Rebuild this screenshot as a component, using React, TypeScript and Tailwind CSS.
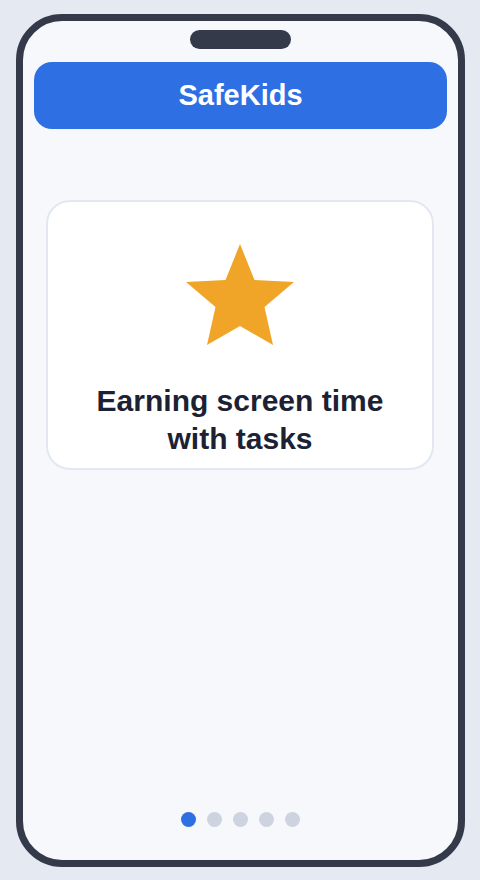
import type React from "react";

const DOTS = ["dot-0", "dot-1", "dot-2", "dot-3", "dot-4"];

const Star: React.FC = () => (
	<svg width="110" height="104" viewBox="0 0 110 104" aria-hidden="true">
		<polygon
			points="55,1 69.5,37 109,39 79.5,64 88,102 55,83 22,102 30.5,64 1,39 40.5,37"
			fill="#f0a528"
		/>
	</svg>
);

export default function App() {
	const active = 0;

	return (
		<div
			className="min-h-screen bg-[#e5e9f2] pt-[14px] pl-[16px]"
			style={{ fontFamily: "'Liberation Sans', Arial, sans-serif" }}
		>
			<div className="w-[449px] h-[853px] border-[7px] border-[#343a4a] rounded-[46px] bg-[#f6f8fc] flex flex-col">
				{/* notch */}
				<div className="mx-auto mt-[9px] w-[101px] h-[19px] rounded-full bg-[#343a4a]" />

				<header className="mt-[13px] ml-[11px] mr-[11px] h-[67px] rounded-[18px] bg-[#2f6fe4] flex items-center justify-center">
					<h1 className="text-white text-[29px] font-bold leading-none">SafeKids</h1>
				</header>

				<div className="mt-[71px] ml-[23px] mr-[24px] h-[270px] rounded-[24px] border-2 border-[#e2e7f1] bg-white flex flex-col items-center pt-[41px]">
					<Star />
					<p className="mt-[35px] text-center text-[30px] leading-[38px] font-bold text-[#1c2233]">
						Earning screen time
						<br />
						with tasks
					</p>
				</div>

				<div className="mt-auto mb-[33px] flex justify-center gap-[11px]">
					{DOTS.map((id, i) => (
						<span
							key={id}
							className={`block w-[15px] h-[15px] rounded-full ${i === active ? "bg-[#2f6fe4]" : "bg-[#cdd3df]"}`}
						/>
					))}
				</div>
			</div>
		</div>
	);
}
